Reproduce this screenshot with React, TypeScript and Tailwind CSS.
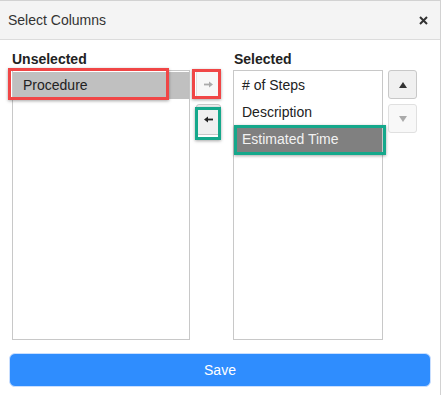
import React from 'react'

const unselected = ['Procedure']
const selected = ['# of Steps', 'Description', 'Estimated Time']

function Arrow({ dir, color }: { dir: 'left' | 'right'; color: string }) {
  // small arrow glyph like the old glyphicons
  return (
    <svg width="9" height="7" viewBox="0 0 9 7">
      {dir === 'right' ? (
        <g fill={color}>
          <rect x="0" y="2.6" width="6" height="1.8" />
          <polygon points="5,0.5 9,3.5 5,6.5" />
        </g>
      ) : (
        <g fill={color}>
          <rect x="3" y="2.6" width="6" height="1.8" />
          <polygon points="4,0.5 0,3.5 4,6.5" />
        </g>
      )}
    </svg>
  )
}

function Tri({ up, color }: { up: boolean; color: string }) {
  return (
    <svg width="8" height="6" viewBox="0 0 8 6">
      <polygon points={up ? '4,0 8,6 0,6' : '0,0 8,0 4,6'} fill={color} />
    </svg>
  )
}

export default function App() {
  return (
    <div className="relative h-[395px] w-[441px] border-r border-t border-[#d2d2d2] bg-white font-['Liberation_Sans',Arial,sans-serif] text-[14px] text-[#333]">
      <div className="flex h-[39px] items-center justify-between border-b border-[#dcdcdc] bg-[#f4f4f4] pl-2 pr-[12px]">
        <span>Select Columns</span>
        <svg width="9" height="9" viewBox="0 0 9 9">
          <path d="M1 1L8 8M8 1L1 8" stroke="#333" strokeWidth="2" />
        </svg>
      </div>

      <div className="px-[9px] pt-[9px]">
        <div className="flex pl-[3px]">
          <div className="w-[178px]">
            <div className="h-[21px] font-bold leading-[20px] text-[#222]">Unselected</div>
            <div className="h-[270px] border border-[#c8c8c8] pt-px">
              {unselected.map((c) => (
                <div key={c} className="flex h-[27px] items-center bg-[#c0c0c0] pl-[10px] text-[#222]">
                  {c}
                </div>
              ))}
            </div>
          </div>

          <div className="ml-[6px] flex flex-col gap-[5px] pt-[21px]">
            <button className="flex h-[29px] w-[25px] items-center justify-center rounded-[3px] border border-[#e0e0e0] bg-[#f7f7f7]">
              <Arrow dir="right" color="#aaa" />
            </button>
            <button className="flex h-[31px] w-[25px] items-center justify-center rounded-[3px] border border-[#c8c8c8] bg-[#f0f0f0]">
              <Arrow dir="left" color="#222" />
            </button>
          </div>

          <div className="ml-[12px] w-[150px]">
            <div className="h-[21px] pl-px font-bold leading-[20px] text-[#222]">Selected</div>
            <div className="h-[270px] border border-[#c8c8c8] pt-px">
              {selected.map((c, i) => (
                <div
                  key={c}
                  className={
                    i === 2
                      ? 'flex h-[27px] items-center bg-[#808080] pl-[8px] text-[#f2f2f2]'
                      : 'flex h-[27px] items-center pl-[8px] text-[#222]'
                  }
                >
                  {c}
                </div>
              ))}
            </div>
          </div>

          <div className="ml-[5px] flex flex-col gap-[5px] pt-[21px]">
            <button className="flex h-[29px] w-[29px] items-center justify-center rounded-[3px] border border-[#c8c8c8] bg-[#f0f0f0]">
              <Tri up color="#333" />
            </button>
            <button className="flex h-[29px] w-[29px] items-center justify-center rounded-[3px] border border-[#e0e0e0] bg-[#f8f8f8]">
              <Tri up={false} color="#aaa" />
            </button>
          </div>
        </div>

        <button className="mt-[13px] h-[34px] w-full rounded-[6px] border border-[#c9dfff] bg-[#2f8dfe] text-white">
          Save
        </button>
      </div>

      {/* annotation boxes */}
      <div className="absolute left-[8px] top-[67px] h-[32px] w-[161px] border-[3px] border-[#f04646] shadow-[0_1px_3px_rgba(0,0,0,0.35)]" />
      <div className="absolute left-[192px] top-[68px] h-[30px] w-[29px] border-[3px] border-[#f04646] shadow-[0_1px_3px_rgba(0,0,0,0.35)]" />
      <div className="absolute left-[195px] top-[106px] h-[33px] w-[26px] border-[3px] border-[#15a88b] shadow-[0_1px_3px_rgba(0,0,0,0.35)]" />
      <div className="absolute left-[234px] top-[124px] h-[30px] w-[152px] border-[3px] border-[#15a88b] shadow-[0_1px_3px_rgba(0,0,0,0.35)]" />
    </div>
  )
}
